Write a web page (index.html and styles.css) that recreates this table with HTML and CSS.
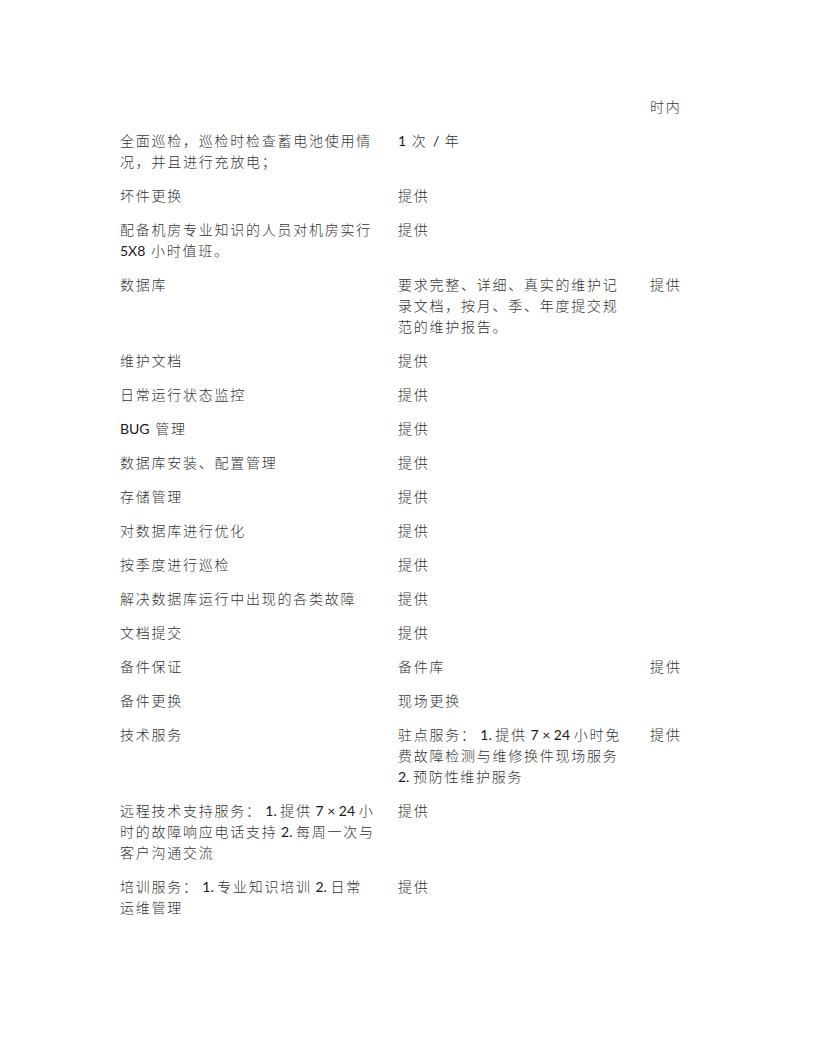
FILE: index.html
```html
<!DOCTYPE html>
<html lang="zh-CN">
<head>
<meta charset="utf-8">
<title>维护服务</title>
<link rel="stylesheet" href="styles.css">
</head>
<body>
<div class="page">
  <div class="table">
    <div class="row">
      <div class="c1"></div>
      <div class="c2"></div>
      <div class="c3">时内</div>
    </div>
    <div class="row">
      <div class="c1">全面巡检，巡检时检查蓄电池使用情况，并且进行充放电；</div>
      <div class="c2"><span class="lat">1</span> 次 <span class="lat">/</span> 年</div>
      <div class="c3"></div>
    </div>
    <div class="row">
      <div class="c1">坏件更换</div>
      <div class="c2">提供</div>
      <div class="c3"></div>
    </div>
    <div class="row">
      <div class="c1">配备机房专业知识的人员对机房实行<span class="lat">5X8</span> 小时值班。</div>
      <div class="c2">提供</div>
      <div class="c3"></div>
    </div>
    <div class="row">
      <div class="c1">数据库</div>
      <div class="c2">要求完整、详细、真实的维护记录文档，按月、季、年度提交规范的维护报告。</div>
      <div class="c3">提供</div>
    </div>
    <div class="row">
      <div class="c1">维护文档</div>
      <div class="c2">提供</div>
      <div class="c3"></div>
    </div>
    <div class="row">
      <div class="c1">日常运行状态监控</div>
      <div class="c2">提供</div>
      <div class="c3"></div>
    </div>
    <div class="row">
      <div class="c1"><span class="lat">BUG</span> 管理</div>
      <div class="c2">提供</div>
      <div class="c3"></div>
    </div>
    <div class="row">
      <div class="c1">数据库安装、配置管理</div>
      <div class="c2">提供</div>
      <div class="c3"></div>
    </div>
    <div class="row">
      <div class="c1">存储管理</div>
      <div class="c2">提供</div>
      <div class="c3"></div>
    </div>
    <div class="row">
      <div class="c1">对数据库进行优化</div>
      <div class="c2">提供</div>
      <div class="c3"></div>
    </div>
    <div class="row">
      <div class="c1">按季度进行巡检</div>
      <div class="c2">提供</div>
      <div class="c3"></div>
    </div>
    <div class="row">
      <div class="c1">解决数据库运行中出现的各类故障</div>
      <div class="c2">提供</div>
      <div class="c3"></div>
    </div>
    <div class="row">
      <div class="c1">文档提交</div>
      <div class="c2">提供</div>
      <div class="c3"></div>
    </div>
    <div class="row">
      <div class="c1">备件保证</div>
      <div class="c2">备件库</div>
      <div class="c3">提供</div>
    </div>
    <div class="row">
      <div class="c1">备件更换</div>
      <div class="c2">现场更换</div>
      <div class="c3"></div>
    </div>
    <div class="row">
      <div class="c1">技术服务</div>
      <div class="c2">驻点服务：<span class="lat"> 1. </span>提供<span class="lat"> 7 × 24 </span>小时免费故障检测与维修换件现场服务<span class="lat"> 2. </span>预防性维护服务</div>
      <div class="c3">提供</div>
    </div>
    <div class="row">
      <div class="c1">远程技术支持服务：<span class="lat"> 1. </span>提供<span class="lat"> 7 × 24 </span>小时的故障响应电话支持<span class="lat"> 2. </span>每周一次与客户沟通交流</div>
      <div class="c2">提供</div>
      <div class="c3"></div>
    </div>
    <div class="row">
      <div class="c1">培训服务：<span class="lat"> 1. </span>专业知识培训<span class="lat"> 2. </span>日常<br>运维管理</div>
      <div class="c2">提供</div>
      <div class="c3"></div>
    </div>
  </div>
</div>
</body>
</html>
```

FILE: styles.css
```css
html, body {
  margin: 0;
  padding: 0;
  background: #ffffff;
}

.page {
  width: 816px;
  min-height: 1056px;
  box-sizing: border-box;
  padding: 89px 0 0 120px;
  font-family: "Lato", "Noto Sans CJK SC", sans-serif;
  font-size: 14px;
  font-weight: 300;
  line-height: 21px;
  color: #333333;
  letter-spacing: 1.75px;
}

.table {
  display: grid;
  grid-template-columns: 278px 252px 100px;
}

.row {
  display: contents;
}

.c1, .c2, .c3 {
  padding: 6.5px 0;
}

.c1 {
  padding-right: 14px;
}

.c2 {
  padding-right: 20px;
}

.lat {
  letter-spacing: 0;
  font-weight: 400;
  color: #1a1a1a;
}
```
